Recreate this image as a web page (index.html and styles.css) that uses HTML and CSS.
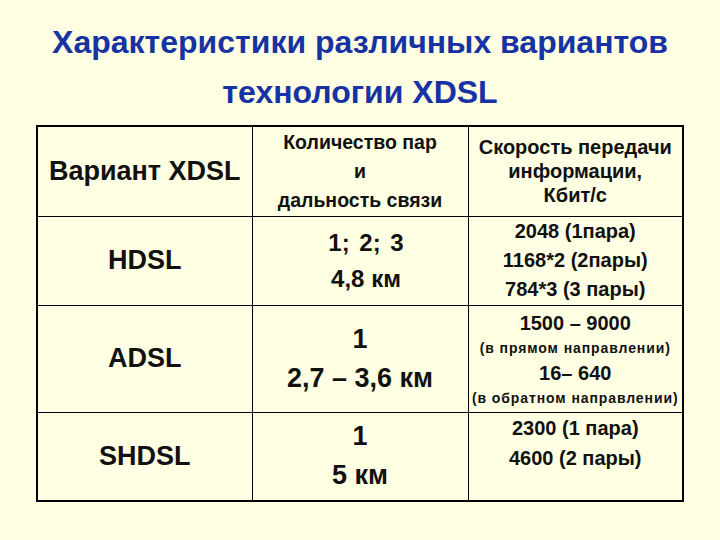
FILE: index.html
```html
<!DOCTYPE html>
<html lang="ru">
<head>
<meta charset="utf-8">
<link rel="stylesheet" href="styles.css">
</head>
<body>
<div class="slide">
  <h1 class="title">Характеристики различных вариантов<br>технологии XDSL</h1>
  <table class="grid">
    <colgroup><col class="c1"><col class="c2"><col class="c3"></colgroup>
    <tr class="r-head">
      <td class="name">Вариант XDSL</td>
      <td class="pairs-head"><div>Количество пар</div><div>и</div><div>дальность связи</div></td>
      <td class="speed-head"><div>Скорость передачи</div><div>информации,</div><div>Кбит/с</div></td>
    </tr>
    <tr class="r-hdsl">
      <td class="name">HDSL</td>
      <td class="pairs small"><div class="spaced">1; 2; 3</div><div>4,8 км</div></td>
      <td class="speed"><div>2048 (1пара)</div><div>1168*2 (2пары)</div><div>784*3 (3 пары)</div></td>
    </tr>
    <tr class="r-adsl">
      <td class="name">ADSL</td>
      <td class="pairs"><div>1</div><div>2,7 – 3,6 км</div></td>
      <td class="speed top adsl"><div class="l1">1500 – 9000</div><div class="note">(в прямом направлении)</div><div class="l3">16– 640</div><div class="note">(в обратном направлении)</div></td>
    </tr>
    <tr class="r-shdsl">
      <td class="name">SHDSL</td>
      <td class="pairs"><div>1</div><div>5 км</div></td>
      <td class="speed top shdsl"><div>2300 (1 пара)</div><div>4600 (2 пары)</div></td>
    </tr>
  </table>
</div>
</body>
</html>
```
FILE: styles.css
```css
html, body {
  margin: 0;
  padding: 0;
  background: #ffffe3;
}
body {
  width: 720px;
  height: 540px;
  overflow: hidden;
  font-family: "Liberation Sans", Arial, sans-serif;
  font-weight: bold;
  color: #111;
}
.slide {
  padding-top: 17px;
}
.title {
  margin: 0;
  text-align: center;
  font-size: 32px;
  line-height: 50px;
  color: #1732a3;
  font-weight: bold;
}
.grid {
  margin: 8px 0 0 36px;
  width: 648px;
  border-collapse: collapse;
  border: 2px solid #000;
  table-layout: fixed;
}
.c1 { width: 215px; }
.c2 { width: 216px; }
.c3 { width: 215px; }
.grid td {
  border: 1px solid #000;
  text-align: center;
  vertical-align: middle;
  padding: 0;
}
.r-head { height: 90px; }
.r-hdsl { height: 89px; }
.r-adsl { height: 107px; }
.r-shdsl { height: 89px; }
.name {
  font-size: 27px;
}
.pairs-head {
  font-size: 19.5px;
  line-height: 29px;
}
.speed-head {
  font-size: 20px;
  line-height: 24px;
}
.pairs {
  font-size: 27px;
  line-height: 39px;
}
.pairs.small {
  font-size: 24px;
  line-height: 36px;
  padding-left: 12px;
}
.spaced { word-spacing: 3px; }
.speed {
  font-size: 20px;
  line-height: 29px;
}
.speed.top {
  vertical-align: top;
}
.speed.adsl {
  padding-top: 4px;
  line-height: 26px;
}
.speed.shdsl {
  padding-top: 0;
  line-height: 30px;
}
.note {
  font-size: 14px;
  letter-spacing: 0.9px;
  line-height: 24px;
}
```
